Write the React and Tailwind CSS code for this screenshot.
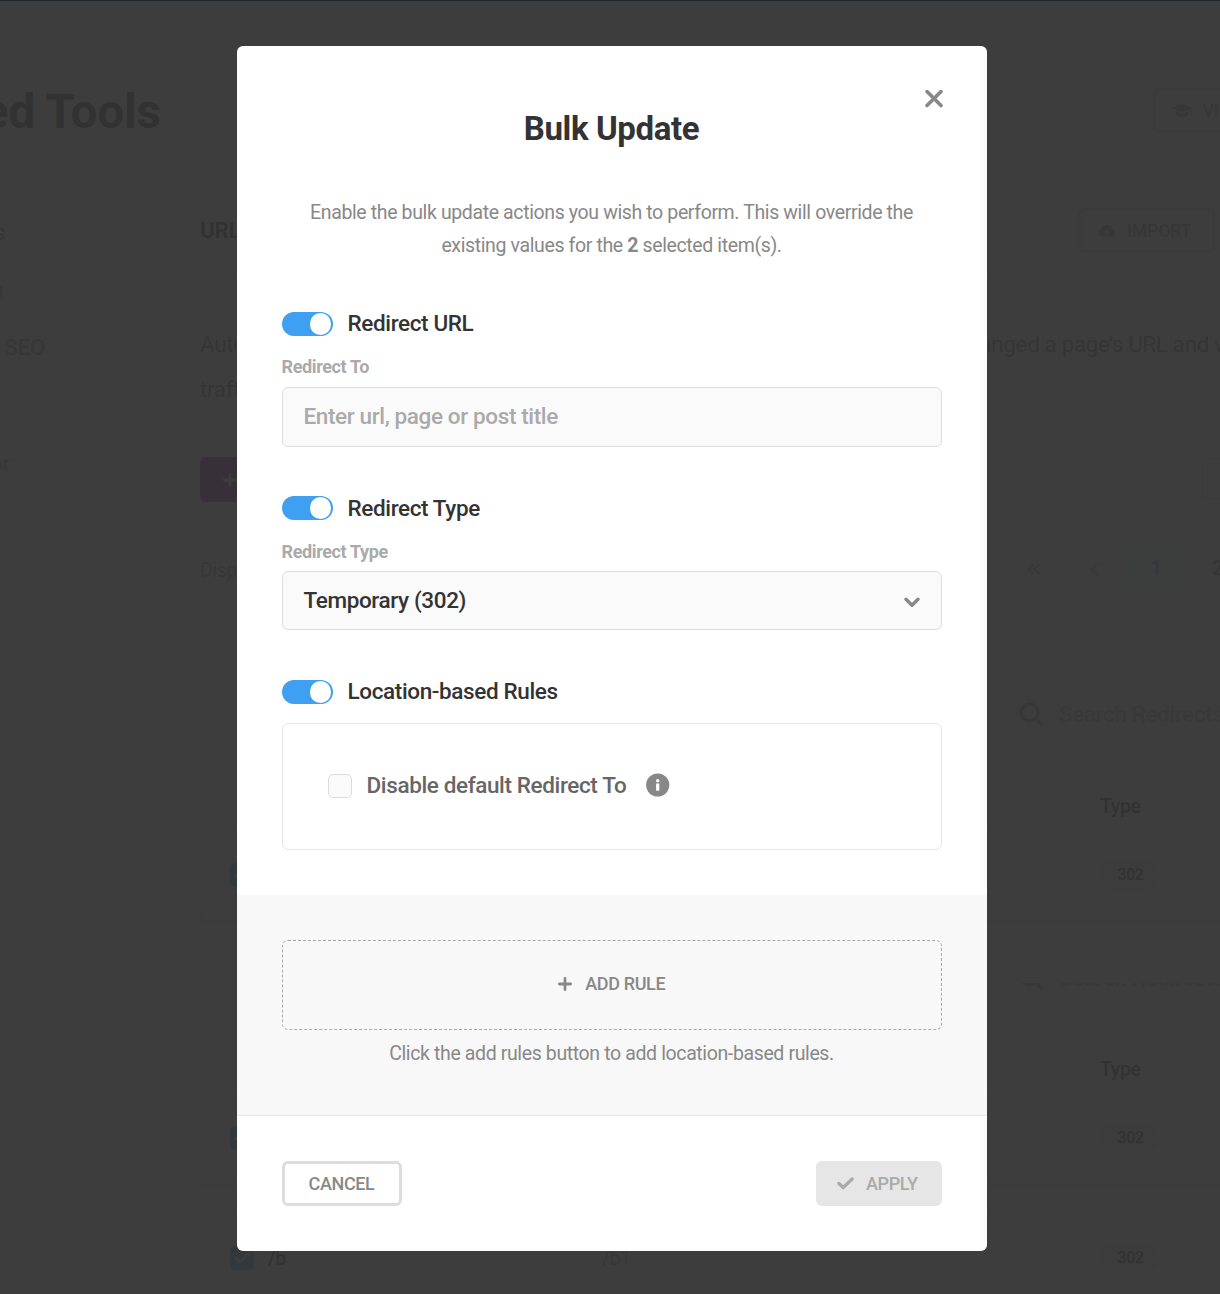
import React from "react";
import clsx from "clsx";

const SIDEBAR = [
  { label: "s", className: "-ml-[6px]" },
  { label: "n", className: "-ml-[9px]" },
  { label: "SEO", className: "ml-[4.5px]" },
  { label: "", className: "" },
  { label: "or", className: "-ml-[10px]" },
];

function PlusIcon({ className }) {
  return (
    <svg viewBox="0 0 14 14" className={className} fill="none" stroke="currentColor" strokeWidth="2.8" strokeLinecap="round">
      <path d="M7 1.4v11.2M1.4 7h11.2" />
    </svg>
  );
}

function CheckIcon({ className }) {
  return (
    <svg viewBox="0 0 17 13" className={className} fill="none" stroke="currentColor" strokeWidth="3.4" strokeLinecap="round" strokeLinejoin="round">
      <path d="M1.900 6.600 6.200 10.600 15.100 2" />
    </svg>
  );
}

function Toggle({ className, children }) {
  return (
    <div className="flex h-6 items-center">
      <div className="flex h-6 w-[51px] items-start justify-end rounded-full bg-[#3f9ff0] pt-px pr-[1.5px]">
        <div className="size-[21.5px] rounded-full bg-white" />
      </div>
      <span className={clsx("ml-[15px] text-[22.5px] leading-[33px] font-medium text-[#333]", className)}>
        {children}
      </span>
    </div>
  );
}

function TypeRow({ from, to }) {
  return (
    <div className="flex h-[92px] shrink-0 items-center rounded-md border border-[#ddd] bg-white pl-[29px] shadow-[0_4px_0_0_#ececec]">
      <div className="flex size-6 items-center justify-center rounded-[5px] bg-[#3f9ff0]">
        <CheckIcon className="w-4 text-white" />
      </div>
      <span className="ml-3.5 w-[334px] pt-px text-[19.5px] font-medium text-[#333]">{from}</span>
      <span className="w-[498px] pt-px text-[19.5px] text-[#888]">{to}</span>
      <span className="flex h-[30px] w-[60px] items-center justify-center rounded-full bg-[#e0e0e0] pl-px text-[16px] font-medium text-[#333]">
        302
      </span>
    </div>
  );
}

function ColumnHead() {
  return <div className="pl-[900px] text-[19.5px] leading-[30px] font-medium text-[#333]">Type</div>;
}

function SearchBox() {
  return (
    <div className="ml-[798px] flex h-[60px] w-[330px] shrink-0 items-center rounded-md border border-[#ddd] pb-[3px] pl-5">
      <svg viewBox="0 0 24 24" className="w-6" fill="none" stroke="#888" strokeWidth="3.500" strokeLinecap="round">
        <circle cx="10.500" cy="10.500" r="8.500" />
        <path d="m17 17 5 5" />
      </svg>
      <span className="ml-4 pt-0.5 text-[22.5px] font-medium whitespace-nowrap text-[#aaa]">Search Redirects</span>
    </div>
  );
}

function Backdrop() {
  return (
    <div className="flex h-[1294px] w-[1500px] flex-col bg-[#f6f6f6]">
      <div className="flex h-[185px] shrink-0 items-start">
        <div className="flex w-[160.5px] justify-end pt-[82px] text-[48px] leading-[60px] font-bold whitespace-nowrap text-[#333]">
          ed Tools
        </div>
        <div className="mt-[88px] ml-[992px] flex h-[45px] w-[160px] items-center rounded-md border-[3px] border-[#d6d6d6] pl-4 text-[18px] font-medium whitespace-nowrap text-[#888]">
          <svg viewBox="0 0 20 16" className="mr-[11px] w-5" fill="currentColor">
            <path d="M10 1 0 5l10 4 8-3.200V12h1.500V5z" />
            <path d="M3.500 8v3.500C6 15 14 15 16.500 11.500V8L10 10.700z" />
          </svg>
          VI
        </div>
      </div>
      <div className="flex flex-1">
        <nav className="w-[155px] shrink-0 pt-[17.5px]">
          {SIDEBAR.map((item, i) => (
            <div key={i} className="h-[57.75px] text-[22.5px] leading-[58px] font-medium text-[#888]">
              <span className={item.className}>{item.label}</span>
            </div>
          ))}
        </nav>
        <main className="w-[1345px] rounded-t-md bg-[#fefefe]">
          <div className="flex h-[93px] items-center border-b border-[#ddd] pb-0.5 pl-[45px]">
            <h2 className="w-[878px] pt-0.5 text-[22.5px] font-bold text-[#333]">URL</h2>
            <div className="flex h-[45px] w-[137px] items-center rounded-md border-[3px] border-[#ccc] pl-[17px] text-[18px] font-medium text-[#888]">
              <svg viewBox="0 0 18 13" className="mr-[11px] w-[18px]" fill="currentColor">
                <path fillRule="evenodd" d="M14.500 5A5.500 5.500 0 0 0 4 4.200 4.300 4.300 0 0 0 4.300 12.500H14a3.800 3.800 0 0 0 .5-7.500zM10 8.500v3H8v-3H5.800L9 5l3.200 3.500z" />
              </svg>
              IMPORT
            </div>
          </div>
          <div className="pl-[45px]">
            <div className="mt-11 flex h-[45px] items-center text-[22.5px] whitespace-nowrap text-[#666]">
              <span className="w-[756px]">Auto</span>
              <span>changed a page’s URL and want</span>
            </div>
            <div className="text-[22.5px] leading-[45px] text-[#666]">traffic</div>
            <div className="mt-[45px] flex">
              <div className="flex h-[45px] w-[200px] items-center rounded-md bg-[#8d00b1] pl-[23px]">
                <PlusIcon className="size-3.5 text-white" />
              </div>
              <div className="ml-[801px] h-[43px] w-40 rounded-md border-[3px] border-[#ddd]" />
            </div>
            <div className="mt-[45px] flex h-[43px] items-center text-[19.5px] text-[#888]">
              <span className="w-[803px] pt-[5px]">Displaying</span>
              <div className="flex h-[43px] items-center rounded-md border border-[#e6e6e6] text-center font-medium">
                <svg viewBox="0 0 14 12" className="mx-[23px] w-3.5" fill="none" stroke="#aaa" strokeWidth="2">
                  <path d="M6.500 1 1.500 6l5 5M12.500 1l-5 5 5 5" />
                </svg>
                <svg viewBox="0 0 9 14" className="mx-[26px] w-[9px]" fill="none" stroke="#aaa" strokeWidth="2.800">
                  <path d="M8 1 2 7l6 6" />
                </svg>
                <span className="w-[62px] bg-[#e1f6ff] leading-[41px] text-[#17a8e3]">1</span>
                <span className="w-[61px] text-[#666]">2</span>
              </div>
            </div>
            <div className="mt-[95px]">
              <SearchBox />
            </div>
            <div className="mt-[47px]">
              <ColumnHead />
            </div>
            <div className="mt-[7px]">
              <TypeRow from="" to="" />
            </div>
            {/* second toolbar is scrolled, only its lower part shows */}
            <div className="mt-[62px] flex h-[26px] items-end overflow-hidden">
              <SearchBox />
            </div>
            <div className="mt-[46px]">
              <ColumnHead />
            </div>
            <div className="mt-[7px]">
              <TypeRow from="" to="" />
            </div>
            <div className="mt-[28px]">
              <TypeRow from="/b" to="/b1" />
            </div>
          </div>
        </main>
      </div>
    </div>
  );
}

function BulkUpdateModal() {
  return (
    <div role="dialog" className="flex h-[1205px] w-[750px] flex-col overflow-hidden rounded-md bg-white">
      <div className="flex h-[266px] flex-col">
        <button className="mt-[43.5px] mr-[44px] self-end text-[#888]" aria-label="Close">
          <svg viewBox="0 0 18 18" className="size-[18px]" fill="none" stroke="currentColor" strokeWidth="3.600" strokeLinecap="round">
            <path d="m2 1.500 14 14M16 1.500l-14 14" />
          </svg>
        </button>
        <h1 className="-mt-[1.5px] text-center text-[33px] leading-[45px] font-bold text-[#333]">
          Bulk Update
        </h1>
        <p className="mt-[45px] text-center text-[19.5px] leading-[33px] text-[#888]">
          Enable the bulk update actions you wish to perform. This will override the
          <br />
          existing values for the <b className="font-bold">2</b> selected item(s).
        </p>
      </div>

      <div className="h-[583px] px-[45px]">
        <Toggle className="-mt-[2px]">Redirect URL</Toggle>
        <div className="mt-[18px] h-[33px] text-[18px] leading-[26px] font-bold text-[#aaa]">
          Redirect To
        </div>
        <input
          className="block h-[60px] w-full rounded-md border border-[#ddd] bg-[#fafafa] px-[21px] pb-0.5 text-[22.5px] font-medium tracking-[-0.375px] placeholder:text-[#aaa]"
          placeholder="Enter url, page or post title"
        />

        <div className="mt-[49px]">
          <Toggle>Redirect Type</Toggle>
        </div>
        <div className="mt-[19px] h-8 text-[18px] leading-[26px] font-bold text-[#aaa]">
          Redirect Type
        </div>
        <div className="flex h-[59px] items-center justify-between rounded-md border border-[#ddd] bg-[#fafafa] px-[21px] text-[22.5px] font-medium text-[#333]">
          <span>Temporary (302)</span>
          <svg viewBox="0 0 16 11" className="mt-[3px] w-4 text-[#888]" fill="none" stroke="currentColor" strokeWidth="3.400" strokeLinecap="round" strokeLinejoin="round">
            <path d="m2 2.300 6 6 6-6" />
          </svg>
        </div>

        <div className="mt-[50px]">
          <Toggle className="-mt-[2px]">Location-based Rules</Toggle>
        </div>
        <div className="mt-[19px] flex h-[127px] items-start rounded-md border border-[#e6e6e6] pt-[50px] pl-[45px]">
          <div className="size-6 rounded-[5px] border border-[#ddd] bg-[#fafafa]" />
          <span className="-mt-[5px] ml-[15px] text-[22.5px] leading-[33px] font-medium text-[#666]">
            Disable default Redirect To
          </span>
          <svg viewBox="0 0 24 24" className="-mt-px ml-[19.5px] size-6">
            <circle cx="11.700" cy="12" r="11.600" fill="#888" />
            <circle cx="11.700" cy="7.700" r="1.700" fill="#fff" />
            <path d="M10.100 10.500h3.200v7.200h-3.200z" fill="#fff" />
          </svg>
        </div>
      </div>

      <div className="h-[221px] border-b border-[#e6e6e6] bg-[#f8f8f8] px-[45px] pt-[45px]">
        <button className="flex h-[90px] w-full items-center justify-center rounded-md border border-dashed border-[#aaa] pb-[3px] text-[18px] font-medium text-[#888]">
          <PlusIcon className="mt-px mr-[13.5px] size-3.5" />
          ADD RULE
        </button>
        <p className="mt-[7px] text-center text-[19.5px] leading-[33px] text-[#888]">
          Click the add rules button to add location-based rules.
        </p>
      </div>

      <div className="flex justify-between px-[45px] pt-[45px]">
        <button className="h-[45px] w-[120px] rounded-md border-[3px] border-[#ddd] text-[18px] font-medium text-[#888]">
          CANCEL
        </button>
        <button className="flex h-[45px] w-[126px] items-center rounded-md bg-[#e6e6e6] pl-[21.5px] text-[18px] font-medium text-[#aaa]">
          <CheckIcon className="mr-3 w-[17px]" />
          APPLY
        </button>
      </div>
    </div>
  );
}

export default function App() {
  return (
    <div className="relative h-[1294px] w-[1220px] overflow-hidden font-['Roboto',sans-serif] tracking-[-0.375px]">
      <Backdrop />
      <div className="absolute inset-0 flex items-start border-t border-[#20252a] bg-[#333333]/95 bg-clip-padding pt-[45px] pl-[236.5px]">
        <BulkUpdateModal />
      </div>
    </div>
  );
}
